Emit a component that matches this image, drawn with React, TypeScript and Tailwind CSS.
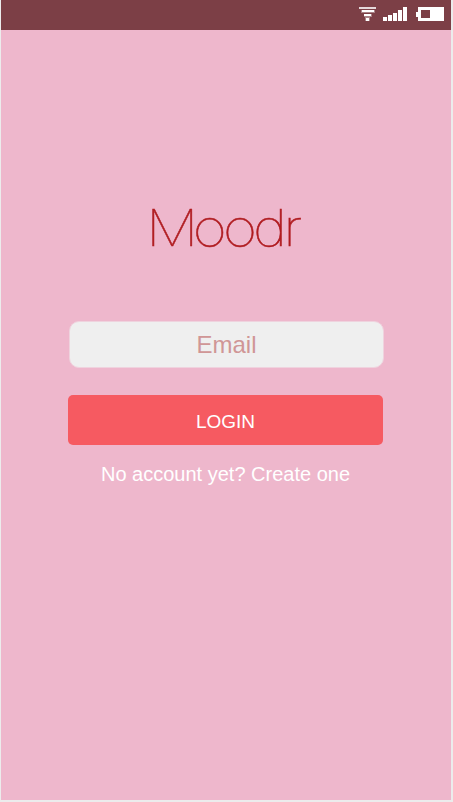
function StatusIcons() {
  return (
    <svg width="86" height="16" viewBox="359 6 86 16" fill="#fff" shapeRendering="crispEdges" aria-hidden="true">
      <path d="M359 7h17v2h-17z" opacity=".8" />
      <path d="M362 10h12v2h-12zM364 14h7v2h-7zM366 18h3v3h-3z" />
      <path d="M361 10h14v3h-14zM364 14h8v3h-8zM365 17h5v4h-5z" opacity=".35" />
      <path d="M383 17h4v4h-4zM388 15h4v6h-4zM393 13h4v8h-4zM398 10h4v11h-4zM403 7h4v14h-4z" />
      <path fillRule="evenodd" d="M418 7h26v14h-26v-4h-2v-5h2zM421 10v8h9v-8z" />
    </svg>
  );
}

export default function App() {
  return (
    <div className="h-[802px] w-[453px] bg-[#ececec] pr-[2px] pb-[2px] pl-px font-['Liberation_Sans',Arial,sans-serif]">
      <main className="flex h-[800px] flex-col bg-[#eeb7cc]">
        <header className="flex h-[30px] shrink-0 items-start justify-end bg-[#7c3f46] pt-[6px] pr-[6px]">
          <StatusIcons />
        </header>
        <h1 className="mt-[167px] ml-[145px] h-[62px] w-[160px] origin-left scale-x-[1.15] font-['Inter',sans-serif] text-[51px] leading-[62px] font-thin tracking-[-3.3px] whitespace-nowrap text-[#b01c20] [-webkit-text-stroke:0.5px_#b01c20]">
          <span className="tracking-[-5px]">M</span>oodr
        </h1>
        <input
          type="email"
          aria-label="Email"
          placeholder="Email"
          className="mt-[62px] ml-[68px] h-[47px] w-[315px] shrink-0 rounded-[10px] border border-[#efd3de] bg-[#efefef] text-center text-[24px] text-[#d09696] outline-none placeholder:text-[#d09696]"
        />
        <button className="mt-[27px] ml-[67px] h-[50px] w-[315px] shrink-0 rounded-[5px] bg-[#f65a61] pt-[3px] text-[19px] leading-[22px] text-white">
          LOGIN
        </button>
        <a className="mt-[17px] ml-[100px] text-[20px] leading-[24px] whitespace-nowrap text-white">
          No account yet? Create one
        </a>
      </main>
    </div>
  );
}
